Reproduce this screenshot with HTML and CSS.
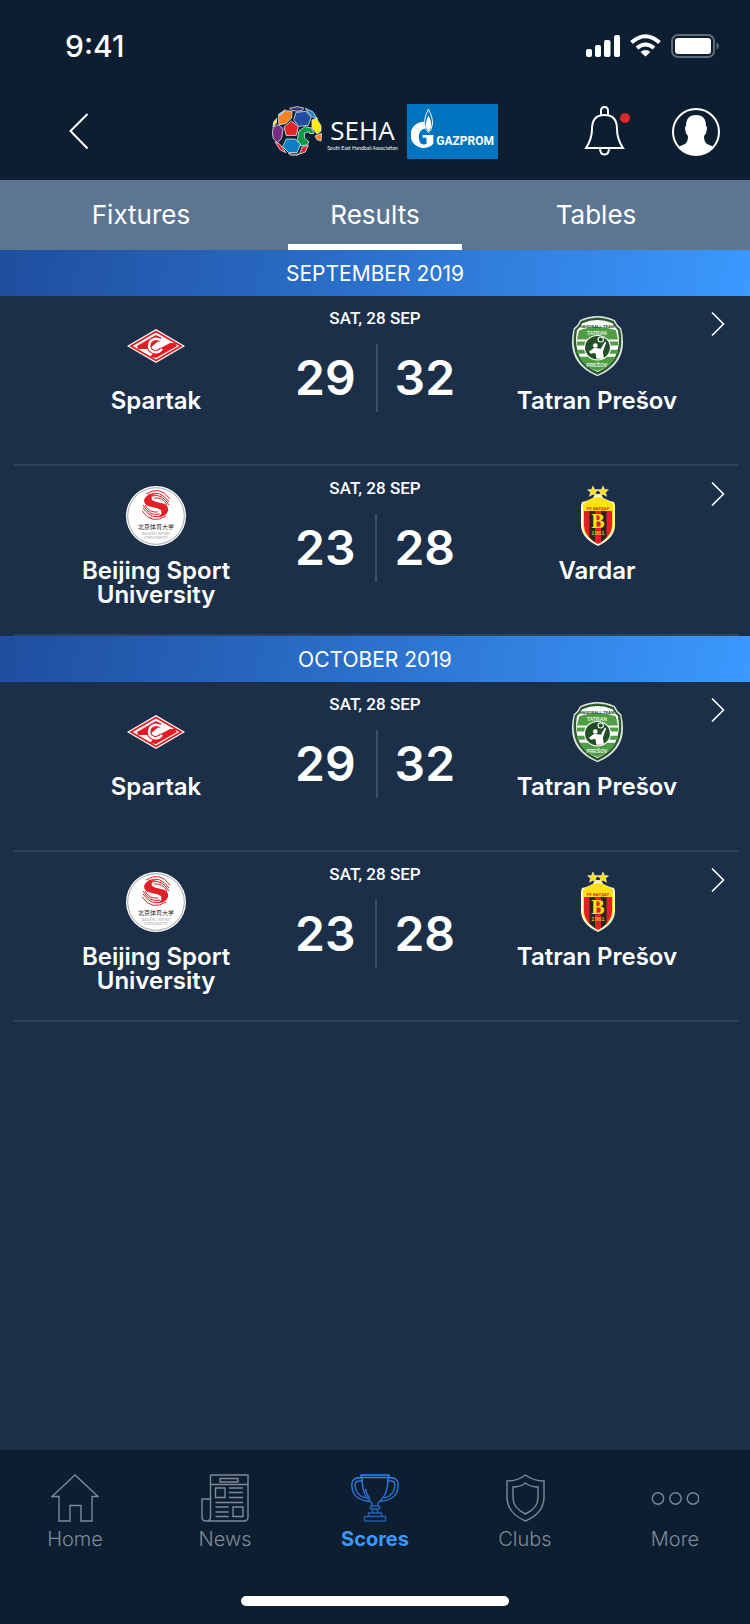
FILE: index.html
```html
<!DOCTYPE html>
<html lang="en">
<head>
<meta charset="utf-8">
<meta name="viewport" content="width=device-width, initial-scale=1">
<title>SEHA – Results</title>
<link rel="stylesheet" href="styles.css">
</head>
<body>
<svg class="sprite" aria-hidden="true">
  <defs>
    <linearGradient id="trophy-blue" x1="0" y1="0" x2="0" y2="48" gradientUnits="userSpaceOnUse">
      <stop offset="0" stop-color="#2f86ee"/><stop offset="1" stop-color="#2257a8"/>
    </linearGradient>
    <clipPath id="vardar-clip"><path d="M17 25h28v14c0 9-7 15-14 19-7-4-14-10-14-19z"/></clipPath>
  </defs>
  <symbol id="spartak" viewBox="0 0 60 60">
    <path d="M30 13 59 30 30 47 1 30z" fill="#fff"/>
    <path d="M30 15.500 55 30 30 44.500 5 30z" fill="none" stroke="#e31b23" stroke-width="1.800"/>
    <path d="M11 30 30 19l6 3-13 11h-11z" fill="#e31b23"/>
    <path d="M24 41l5-6 15-8h5l2 3-21 12z" fill="#e31b23"/>
    <path d="M36 25q-7-5-12 1-3 8 4 10 5 1 8-3" fill="none" stroke="#e31b23" stroke-width="4.600"/>
    <path d="M36 25q-7-5-12 1-3 8 4 10 5 1 8-3M36 22v5h-4" fill="none" stroke="#fff" stroke-width="2.400"/>
  </symbol>
  <symbol id="tatran" viewBox="0 0 60 60">
    <g transform="translate(-3 -1) scale(1.08 1.02)">
      <path d="M15 5Q31-3 47 5q2 5 6 8 8 34-22 47Q1 47 9 13q4-3 6-8z" fill="#dfe6df"/>
      <path d="M16 6q15-7 30 0 2 5 6 8 6 32-21 44.500Q4 46 10 14q4-3 6-8z" fill="#2c5a2e"/>
      <path d="M17 8q14-6 28 0 2 4 5 7 5 30-19 41Q7 45 12 15q3-3 5-7z" fill="#fff"/>
      <path d="M14 15q17-7 34 0l2 9H12z" fill="#4f9d45"/>
      <path d="M12 26h38v4H12zM12 34h38v4H12zM14 41h34q-5 10-17 14-12-4-17-14z" fill="#4f9d45"/>
      <circle cx="31" cy="32" r="12" fill="#234f27" stroke="#fff"/>
      <circle cx="34" cy="24" r="2.500" fill="none" stroke="#fff"/>
      <circle cx="29" cy="30" r="2.200" fill="#fff"/>
      <path d="M23 36l5-4 6 1 4-7 1 1-3 9 1 7h-7l-1-6-4 1z" fill="#fff"/>
    </g>
  </symbol>
  <symbol id="beijing" viewBox="0 0 60 60">
    <circle cx="30" cy="30" r="30" fill="#fff"/>
    <circle cx="30" cy="30" r="28.300" fill="none" stroke="#8a8f94" stroke-width=".8"/>
    <path d="M18 14Q20 7 31 8q-7 1-5 6 3 2 9 3 8 1 7 8-2 6-11 6 6-2 4-7-3-2-9-3-8-1-8-7z" fill="#e01f26"/>
    <path d="M22 9Q34 3 43 16M26 10Q36 7 43 19M20 8Q34-1 44 13M28 12Q37 11 41 19M38 29Q26 35 17 22M34 28Q24 31 17 19M40 30Q26 39 16 25M32 26Q23 27 19 19" fill="none" stroke="#e01f26"/>
  </symbol>
  <symbol id="vardar" viewBox="0 0 60 60">
    <path d="M26 12q1-4 5-4t5 4q6 3 11 4 1 2 1 6v17q0 13-17 21-17-8-17-21V22q0-4 1-6 5-1 11-4z" fill="#fff8d0"/>
    <path d="M16 18q9-7 15-7t15 7v21q0 11-15 19-15-8-15-19z" fill="#ffe11a"/>
    <g clip-path="url(#vardar-clip)">
      <path d="M17 25h28v35H17z" fill="#e31e24"/>
      <path d="M22.500 25h5.500v35h-5.500zM34 25h5.500v35H34z" fill="#2b2522"/>
    </g>
    <path d="m26 0 1.500 3.500 4 .3-3 2.500 1 4L26 8.200l-3.500 2.100 1-4-3-2.500 4-.3zM36 0l1.500 3.500 4 .3-3 2.500 1 4L36 8.200l-3.500 2.100 1-4-3-2.500 4-.3z" fill="#ffe11a" stroke="#fff" stroke-width=".5"/>
  </symbol>
  <symbol id="chevron" viewBox="0 0 14 26">
    <path d="M1 1.500 12.500 13 1 24.500" fill="none" stroke="#fff" stroke-width="1.600"/>
  </symbol>
</svg>

<header class="top">
  <div class="status">
    <span class="status__time">9:41</span>
    <div class="status__icons">
      <svg width="34" height="24" viewBox="0 0 34 24" fill="#fff" aria-hidden="true"><rect y="15" width="6" height="8" rx="2"/><rect x="9" y="11" width="6" height="12" rx="2"/><rect x="18" y="6" width="6.500" height="17" rx="2"/><rect x="28" y="1" width="6" height="22" rx="2"/></svg>
      <svg width="31" height="24" viewBox="0 0 31 24" fill="none" stroke="#fff" stroke-width="4" aria-hidden="true"><path d="M1.500 8.500q14-12.500 28 0"/><path d="M7 14q8.500-7 17 0"/><path d="M15.500 22.500 10.500 18q5-4 10 0z" fill="#fff" stroke="none"/></svg>
      <svg width="48" height="24" viewBox="0 0 48 24" aria-hidden="true"><rect x="1" y="1" width="42" height="22" rx="6" fill="none" stroke="#5d6a77" stroke-width="2"/><rect x="4" y="4" width="36" height="16" rx="3" fill="#fff"/><path d="M45.500 8q5 4 0 8z" fill="#5d6a77"/></svg>
    </div>
  </div>
  <div class="bar">
    <button class="icon-button bar__back" aria-label="Back">
      <svg width="22" height="38" viewBox="0 0 22 38" fill="none" stroke="#fff" stroke-width="2"><path d="M20.500 2 3.500 19l17 17.500"/></svg>
    </button>
    <div class="brand">
      <svg class="brand__ball" width="50" height="50" viewBox="37 34 150 150" stroke="#dfe3ea" stroke-width="2.500" stroke-linejoin="round" aria-hidden="true">
        <path fill="#3c3470" d="M90 41l22-5 20 4-4 7-14 3-18-3z"/>
        <path fill="#8fd0c0" d="M57 59l20-14-7 7-14 13z"/>
        <path fill="#f58220" d="M56 68l22-20 19 2-1 20-18 17-20 3z"/>
        <path fill="#1f4ea1" d="M109 53l30-3 16 18-9 24-29 3-15-20z"/>
        <path fill="#1887cf" d="M137 41l22 10 15 22-15-6-13-12z"/>
        <path fill="#ffef00" d="M157 76l13-5 14 22v16l-12 9-15-19z"/>
        <path fill="#ffef00" d="M42 82l9-11-1 14-10 12z"/>
        <path fill="#e42528" d="M73 97l22-18 21 17-6 26-30 1z"/>
        <path fill="#7b2a82" d="M41 98l15-8 14 12-4 28-12 14-13-12-3-18z"/>
        <path fill="#0a9b48" d="M118 109l18-13 20 4 7 16-13 1-1-6-15 5 1 15 13 10-6 10-19 2-10-18z"/>
        <path fill="#f58220" d="M166 124l20-8-2 23-12-4z"/>
        <path fill="#0b7fc4" d="M80 133h26l17 15-11 26-26-1-17-17z"/>
        <path fill="#e42528" d="M46 142l15 7 18 25-17-8z"/>
        <path fill="#e42528" d="M127 157l19-5-9 20-17 6z"/>
        <path fill="#20242c" d="M86 176l16 3 17-1-10 6-14-1z"/>
      </svg>
      <div class="brand__seha">
        <span class="brand__name">SEHA</span>
        <span class="brand__sub">South East Handball Association</span>
      </div>
      <div class="gazprom">
        <svg class="gazprom__mark" width="26" height="46" viewBox="0 0 26 46" aria-hidden="true">
          <path d="M14 13.500A13.500 13.500 0 1 0 23 36V27H12v3h4v6.500q-6 2-7.500-4-2-10 6-12z" fill="#fff"/>
          <path d="M18 .5q5 10 4 16-1 6-4 8-3-2-4-8-1-6 4-16z" fill="#0074bf" stroke="#fff"/>
          <path d="M18 7q4 8 2.500 12-1 3-2.500 4.500Q16.500 22 15.500 19 14 15 18 7z" fill="#fff"/>
        </svg>
        <span class="gazprom__name">GAZPROM</span>
      </div>
    </div>
    <div class="actions">
      <button class="icon-button" aria-label="Notifications">
        <svg width="46" height="50" viewBox="0 0 46 50" fill="none" stroke="#fff" stroke-width="2"><path d="M17 9V5q0-4 3.500-4T24 5v4"/><path d="M2 42q6-9 6-19 0-14 12.500-14T33 23q0 10 6 19z"/><path d="M16 42q0 6.500 4.500 6.500T25 42"/><circle cx="41" cy="12" r="5" fill="#e02727" stroke="none"/></svg>
      </button>
      <button class="icon-button" aria-label="Profile">
        <svg width="48" height="50" viewBox="0 -2 48 50"><circle cx="24" cy="24" r="23" fill="none" stroke="#fff" stroke-width="2"/><path d="M24 7q10 0 10 11 2 1 0 7-1 2-2 3 0 6 3 8l7 3q-7 8-18 8T6 39l7-3q3-2 3-8-1-1-2-3-2-6 0-7Q14 7 24 7z" fill="#fff"/></svg>
      </button>
    </div>
  </div>
</header>

<nav class="tabs" aria-label="Competition">
  <a class="tabs__item" href="#fixtures">Fixtures</a>
  <a class="tabs__item tabs__item--active" href="#results" aria-current="page">Results</a>
  <a class="tabs__item" href="#tables">Tables</a>
</nav>

<main class="results">
  <section>
    <h2 class="month">SEPTEMBER 2019</h2>
    <a class="match" href="#match-1">
      <span class="team">
        <svg class="team__logo" viewBox="0 0 60 60" aria-hidden="true"><use href="#spartak"/></svg>
        <span class="team__name">Spartak</span>
      </span>
      <span class="score"><span class="score__date">SAT, 28 SEP</span><span class="score__points"><b class="score__number">29</b><b class="score__number">32</b></span></span>
      <span class="team">
        <svg class="team__logo" viewBox="0 0 60 60" aria-hidden="true"><use href="#tatran"/><text x="30" y="12" class="crest-text crest-text--dark">HANDBALL TEAM</text><text x="30" y="19" class="crest-text crest-text--light">TATRAN</text><text x="30" y="51" class="crest-text crest-text--light">PREŠOV</text></svg>
        <span class="team__name">Tatran Prešov</span>
      </span>
      <svg class="match__chevron" aria-hidden="true"><use href="#chevron"/></svg>
    </a>
    <a class="match" href="#match-2">
      <span class="team">
        <svg class="team__logo" viewBox="0 0 60 60" aria-hidden="true"><use href="#beijing"/><text x="30" y="43" class="crest-text crest-text--han">北京体育大学</text><text x="30" y="49" class="crest-text crest-text--grey">BEIJING SPORT</text><text x="30" y="53" class="crest-text crest-text--grey">UNIVERSITY</text></svg>
        <span class="team__name">Beijing Sport University</span>
      </span>
      <span class="score"><span class="score__date">SAT, 28 SEP</span><span class="score__points"><b class="score__number">23</b><b class="score__number">28</b></span></span>
      <span class="team">
        <svg class="team__logo" viewBox="0 0 60 60" aria-hidden="true"><use href="#vardar"/><text x="31" y="24" class="crest-text crest-text--red">РК ВАРДАР</text><text x="31" y="42" class="crest-text crest-text--b">B</text><text x="31" y="49" class="crest-text crest-text--year">1961</text></svg>
        <span class="team__name">Vardar</span>
      </span>
      <svg class="match__chevron" aria-hidden="true"><use href="#chevron"/></svg>
    </a>
  </section>
  <section>
    <h2 class="month">OCTOBER 2019</h2>
    <a class="match" href="#match-3">
      <span class="team">
        <svg class="team__logo" viewBox="0 0 60 60" aria-hidden="true"><use href="#spartak"/></svg>
        <span class="team__name">Spartak</span>
      </span>
      <span class="score"><span class="score__date">SAT, 28 SEP</span><span class="score__points"><b class="score__number">29</b><b class="score__number">32</b></span></span>
      <span class="team">
        <svg class="team__logo" viewBox="0 0 60 60" aria-hidden="true"><use href="#tatran"/><text x="30" y="12" class="crest-text crest-text--dark">HANDBALL TEAM</text><text x="30" y="19" class="crest-text crest-text--light">TATRAN</text><text x="30" y="51" class="crest-text crest-text--light">PREŠOV</text></svg>
        <span class="team__name">Tatran Prešov</span>
      </span>
      <svg class="match__chevron" aria-hidden="true"><use href="#chevron"/></svg>
    </a>
    <a class="match" href="#match-4">
      <span class="team">
        <svg class="team__logo" viewBox="0 0 60 60" aria-hidden="true"><use href="#beijing"/><text x="30" y="43" class="crest-text crest-text--han">北京体育大学</text><text x="30" y="49" class="crest-text crest-text--grey">BEIJING SPORT</text><text x="30" y="53" class="crest-text crest-text--grey">UNIVERSITY</text></svg>
        <span class="team__name">Beijing Sport University</span>
      </span>
      <span class="score"><span class="score__date">SAT, 28 SEP</span><span class="score__points"><b class="score__number">23</b><b class="score__number">28</b></span></span>
      <span class="team">
        <svg class="team__logo" viewBox="0 0 60 60" aria-hidden="true"><use href="#vardar"/><text x="31" y="24" class="crest-text crest-text--red">РК ВАРДАР</text><text x="31" y="42" class="crest-text crest-text--b">B</text><text x="31" y="49" class="crest-text crest-text--year">1961</text></svg>
        <span class="team__name">Tatran Prešov</span>
      </span>
      <svg class="match__chevron" aria-hidden="true"><use href="#chevron"/></svg>
    </a>
  </section>
</main>

<footer class="bottom">
  <nav class="menu" aria-label="Main">
    <a class="menu__item" href="#home">
      <svg class="menu__icon" viewBox="0 0 48 48"><path d="M24 1 1 22.500h7V47h11V31.500h11V47h11V22.500h6z"/></svg>
      Home
    </a>
    <a class="menu__item" href="#news">
      <svg class="menu__icon" viewBox="0 0 48 48"><path d="M9.500 1H47v42q0 4-4 4H5q-4 0-4-4V25h8.500v18q0 4-4 4M9.500 25V1M9.500 10.500H47M19 4.500h18v3.500H19zM14.500 14H24v9.500h-9.500zM28 14h14M28 18.500h14M28 23.500h14M14.500 28.500H42M14.500 33h13M14.500 38h13M14.500 42.500h13M32 33h10v9.500H32z"/></svg>
      News
    </a>
    <a class="menu__item menu__item--active" href="#scores" aria-current="page">
      <svg class="menu__icon menu__icon--trophy" viewBox="0 0 48 48"><path d="M10 1h28v2.500H10zM11 3.500q0 10 3 17 2 4 7 8.500v3M37 3.500q0 10-3 17-2 4-7 8.500v3M10.500 4Q1 2.500.8 11 1 25 16 27l3 .5M37.500 4Q47 2.500 47.200 11 47 25 32 27l-3 .5M10.500 7Q4 6 4 11.500 5 22 15 24M37.500 7Q44 6 44 11.500 43 22 33 24M14.500 15q1 6 4.500 9.500M20 32h8q2 1.500 0 3h-8q-2-1.500 0-3zM21.500 35v4M26.500 35v4M17.500 39h13v3.500h-13zM13.500 42.500h21V47h-21z"/></svg>
      Scores
    </a>
    <a class="menu__item" href="#clubs">
      <svg class="menu__icon" viewBox="0 0 48 48"><path d="M24.500 1q8 6 18.500 6v16q0 16-18.500 24Q6 39 6 23V7q10.500 0 18.500-6z"/><path d="M24.500 9q5 4 12.500 4v11q0 10-12.500 16Q12 34 12 24V13q7.500 0 12.500-4z"/></svg>
      Clubs
    </a>
    <a class="menu__item" href="#more">
      <svg class="menu__icon" viewBox="0 0 48 48"><circle cx="7" cy="24.500" r="5.700"/><circle cx="24.500" cy="24.500" r="5.700"/><circle cx="42" cy="24.500" r="5.700"/></svg>
      More
    </a>
  </nav>
  <div class="home-indicator"></div>
</footer>
</body>
</html>
```

FILE: styles.css
```css
:root {
  --ink: #0c1e30;
  --panel: #1b3048;
  --line: #2c435b;
  --muted: #7f8998;
  --accent: #3b99fc;
}

* {
  box-sizing: border-box;
}

body {
  display: flex;
  flex-direction: column;
  min-height: 100vh;
  margin: 0;
  background: var(--panel);
  color: #fff;
  font-family: Inter, "Noto Sans", sans-serif;
}

a {
  color: inherit;
  text-decoration: none;
}

.sprite {
  position: absolute;
  width: 0;
  height: 0;
}

/* Header */

.top {
  padding-bottom: 10px;
  background: var(--ink);
}

.status {
  display: flex;
  align-items: center;
  justify-content: space-between;
  height: 92px;
  padding: 0 31px 0 65px;
}

.status__time {
  font-size: 30px;
  font-weight: 500;
  line-height: 36px;
}

.status__icons {
  display: flex;
  gap: 10px;
}

.bar {
  display: grid;
  grid-template-columns: 1fr auto 1fr;
  align-items: center;
  height: 78px;
  padding: 0 30px 0 50px;
}

.icon-button {
  display: block;
  padding: 0;
  border: 0;
  background: none;
}

.icon-button svg {
  display: block;
}

.bar__back {
  justify-self: start;
  margin-left: 17px;
}

.brand {
  display: flex;
  align-items: center;
}

.brand__seha {
  display: flex;
  flex-direction: column;
  align-items: center;
  width: 85px;
  padding: 4px 4px 0 0;
  font-family: "Open Sans", "Noto Sans", sans-serif;
}

.brand__name {
  font-size: 26px;
  line-height: 30px;
}

.brand__sub {
  font-family: Lato, sans-serif;
  font-size: 5px;
  line-height: 6px;
  white-space: nowrap;
}

.gazprom {
  display: flex;
  align-items: center;
  width: 91px;
  height: 55px;
  padding: 0 4px;
  background: #0074bf;
}

.gazprom__name {
  padding-top: 20px;
  font-family: Roboto, sans-serif;
  font-size: 12px;
  font-weight: 700;
  line-height: 14px;
}

.actions {
  display: flex;
  align-items: center;
  justify-content: flex-end;
  gap: 42px;
}

/* Tabs */

.tabs {
  display: grid;
  grid-template-columns: 282fr 186fr 256fr;
  height: 70px;
  padding-right: 26px;
  background: #5c7691;
}

.tabs__item {
  display: grid;
  place-items: center;
  margin: 0 6px;
  border: solid transparent;
  border-width: 6px 0;
  font-size: 26px;
  line-height: 32px;
}

.tabs__item--active {
  border-bottom-color: #fff;
}

/* Results */

.results {
  flex: 1;
}

.month {
  margin: 0;
  padding-top: 2px;
  background: linear-gradient(100deg, #1f4e9e, #2b70cb 48%, #3b99ff);
  font-size: 21px;
  font-weight: 400;
  line-height: 44px;
  text-align: center;
}

.match {
  position: relative;
  display: grid;
  grid-template-columns: minmax(0, 214fr) 160px minmax(0, 220fr);
  gap: 32px;
  min-height: 170px;
  margin: 0 12px 0 14px;
  padding: 0 31px 0 35px;
  border-bottom: 2px solid var(--line);
}

.team {
  display: flex;
  flex-direction: column;
  align-items: center;
  gap: 13px;
  padding: 20px 10px 0;
}

.team__logo {
  width: 60px;
  height: 60px;
}

.team__name {
  max-width: 180px;
  font-size: 24px;
  font-weight: 600;
  line-height: 24px;
  text-align: center;
}

.score {
  display: flex;
  flex-direction: column;
  align-items: center;
  gap: 15px;
  padding-top: 11px;
}

.score__date {
  font-family: Roboto, sans-serif;
  font-size: 17px;
  font-weight: 500;
  line-height: 22px;
}

.score__points {
  display: grid;
  grid-template-columns: 1fr 1fr;
  width: 100%;
}

.score__number {
  padding-right: 20px;
  font-size: 48px;
  font-weight: 600;
  line-height: 68px;
  text-align: right;
}

.score__number + .score__number {
  padding: 0 0 0 17px;
  border-left: 2px solid #3a5068;
  text-align: left;
}

.match__chevron {
  position: absolute;
  top: 15px;
  right: 13px;
  width: 14px;
  height: 26px;
}

/* Crest lettering */

.crest-text {
  font-family: "Liberation Sans", sans-serif;
  font-weight: 700;
  text-anchor: middle;
}

.crest-text--dark {
  fill: #234f27;
  font-size: 4px;
}

.crest-text--light {
  fill: #e6f2e4;
  font-size: 5px;
}

.crest-text--han {
  fill: #222;
  font-family: "Noto Sans CJK SC", sans-serif;
  font-size: 6px;
  font-weight: 400;
}

.crest-text--grey {
  fill: #999;
  font-family: "Liberation Serif", serif;
  font-size: 4px;
  font-weight: 400;
}

.crest-text--red {
  fill: #d8331c;
  font-size: 4px;
}

.crest-text--b {
  fill: #ffe11a;
  font-family: "Liberation Serif", serif;
  font-size: 20px;
}

.crest-text--year {
  fill: #ffe11a;
  font-size: 6px;
  font-weight: 400;
}

/* Bottom menu */

.bottom {
  display: flex;
  flex-direction: column;
  align-items: center;
  gap: 45px;
  padding: 24px 0 18px;
  background: var(--ink);
}

.menu {
  display: grid;
  grid-template-columns: repeat(5, 1fr);
  width: 100%;
}

.menu__item {
  display: flex;
  flex-direction: column;
  align-items: center;
  gap: 5px;
  color: var(--muted);
  font-size: 20px;
  font-weight: 300;
  line-height: 24px;
}

.menu__item--active {
  color: var(--accent);
  font-weight: 700;
}

.menu__icon {
  width: 48px;
  height: 48px;
  fill: none;
  stroke: currentColor;
  stroke-width: 1.4;
}

.menu__icon--trophy {
  stroke: url(#trophy-blue);
}

.home-indicator {
  width: 268px;
  height: 10px;
  border-radius: 5px;
  background: #fff;
}
```
